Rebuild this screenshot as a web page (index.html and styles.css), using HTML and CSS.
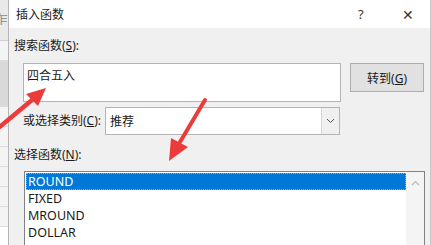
FILE: index.html
```html
<!DOCTYPE html>
<html lang="zh-CN">
  <head>
    <meta charset="UTF-8" />
    <meta name="viewport" content="width=device-width, initial-scale=1.0" />
    <title>插入函数</title>
    <link rel="stylesheet" href="styles.css">
  </head>
  <body>
    <div class="sheet">
      <div class="sheet-head">乍</div>
      <div class="sheet-cell"></div>
      <div class="sheet-cell dark"></div>
      <div class="sheet-cell"></div>
      <div class="sheet-cell"></div>
      <div class="sheet-cell"></div>
      <div class="sheet-cell"></div>
      <div class="sheet-cell"></div>
      <div class="sheet-cell"></div>
    </div>

    <div class="dialog">
      <div class="titlebar">
        <span class="title">插入函数</span>
        <span class="help">?</span>
        <span class="close">&#x2715;</span>
      </div>

      <div class="content">
        <div class="label">搜索函数(<u>S</u>):</div>
        <div class="search-row">
          <div class="search-box">四合五入</div>
          <button class="go-button">转到(<u>G</u>)</button>
        </div>

        <div class="category-row">
          <span class="label">或选择类别(<u>C</u>):</span>
          <div class="combo">
            <span class="combo-text">推荐</span>
            <span class="combo-arrow">
              <svg width="9" height="6" viewBox="0 0 9 6"><path d="M1 1 L4.5 4.5 L8 1" fill="none" stroke="#555" stroke-width="1"/></svg>
            </span>
          </div>
        </div>

        <div class="label list-label">选择函数(<u>N</u>):</div>
        <div class="list">
          <div class="items">
            <div class="item selected">ROUND</div>
            <div class="item">FIXED</div>
            <div class="item">MROUND</div>
            <div class="item">DOLLAR</div>
          </div>
          <div class="scrollbar">
            <svg width="9" height="6" viewBox="0 0 9 6"><path d="M1 5 L4.5 1.5 L8 5" fill="none" stroke="#bbb" stroke-width="1.2"/></svg>
          </div>
        </div>
      </div>
    </div>

    <svg class="arrows" width="431" height="245" viewBox="0 0 431 245">
      <line x1="-4" y1="130" x2="32" y2="100" stroke="#ec3b3b" stroke-width="4.5" stroke-linecap="round"/>
      <polygon points="46,88 26,94 38,106" fill="#ec3b3b"/>
      <line x1="205" y1="100" x2="180" y2="142" stroke="#ec3b3b" stroke-width="4" stroke-linecap="round"/>
      <polygon points="169,161 171,138 188,147" fill="#ec3b3b"/>
    </svg>
  </body>
</html>
```

FILE: styles.css
```css
body {
  margin: 0;
  width: 431px;
  height: 245px;
  overflow: hidden;
  display: flex;
  position: relative;
  font-family: "Noto Sans", "Noto Sans CJK SC", sans-serif;
  font-size: 12px;
  color: #1a1a1a;
  background-color: #fff;
}

.sheet {
  width: 8px;
  background-color: #fff;
  border-right: 1px solid #b5b5b5;
  display: flex;
  flex-direction: column;
}

.sheet-head {
  height: 40px;
  flex-shrink: 0;
  background-color: #e9e9e9;
  color: #888;
  font-size: 12px;
  line-height: 40px;
  text-indent: -4px;
  overflow: hidden;
  border-bottom: 1px solid #d0d0d0;
}

.sheet-cell {
  height: 19px;
  flex-shrink: 0;
  border-bottom: 1px solid #dcdcdc;
  background-color: #f4f4f4;
}

.sheet-cell.dark {
  height: 45px;
  background-color: #d9d9d9;
}

.dialog {
  flex: 1;
  display: flex;
  flex-direction: column;
  overflow: hidden;
  background-color: #f0f0f0;
  border-right: 1px solid #c8c8c8;
}

.titlebar {
  height: 28px;
  flex-shrink: 0;
  background-color: #fff;
  display: flex;
  align-items: center;
  padding-left: 7px;
}

.title {
  flex: 1;
  font-size: 12px;
}

.help {
  width: 14px;
  font-size: 13px;
  margin-right: 30px;
  color: #333;
}

.close {
  width: 14px;
  font-size: 14px;
  margin-right: 14px;
  color: #333;
}

.content {
  flex-shrink: 0;
  padding: 10px 0 0 5px;
}

.label {
  line-height: 16px;
}

.search-row {
  display: flex;
  align-items: flex-start;
  margin-top: 9px;
  padding-left: 9px;
}

.search-box {
  width: 310px;
  height: 33px;
  background-color: #fff;
  border: 1px solid #b4b4b4;
  padding: 2px 3px;
}

.go-button {
  margin-left: 9px;
  width: 74px;
  height: 29px;
  background-color: #e1e1e1;
  border: 1px solid #adadad;
  font-family: "Noto Sans", "Noto Sans CJK SC", sans-serif;
  font-size: 12px;
  color: #1a1a1a;
  padding: 0;
}

.category-row {
  display: flex;
  align-items: center;
  margin-top: 5px;
  padding-left: 9px;
}

.category-row .label {
  width: 82px;
}

.combo {
  width: 233px;
  height: 26px;
  display: flex;
  align-items: center;
  background-color: #fff;
  border: 1px solid #b4b4b4;
}

.combo-text {
  flex: 1;
  padding-left: 4px;
}

.combo-arrow {
  width: 17px;
  height: 26px;
  display: flex;
  align-items: center;
  justify-content: center;
  background-color: #f0f0f0;
  border-left: 1px solid #d6d6d6;
}

.list-label {
  margin-top: 12px;
}

.list {
  margin: 8px 0 0 10px;
  width: 399px;
  height: 80px;
  display: flex;
  background-color: #fff;
  border: 1px solid #828282;
  border-bottom: none;
}

.items {
  flex: 1;
  padding: 1px 0 0 1px;
}

.item {
  height: 17px;
  line-height: 17px;
  padding-left: 2px;
  font-size: 12.5px;
}

.item.selected {
  background-color: #0078d7;
  color: #fff;
  outline: 1px dotted #7fb6e6;
  outline-offset: -1px;
}

.scrollbar {
  width: 18px;
  background-color: #f4f4f4;
  display: flex;
  justify-content: center;
  padding-top: 8px;
}

.arrows {
  position: absolute;
  left: 0;
  top: 0;
  pointer-events: none;
}
```
